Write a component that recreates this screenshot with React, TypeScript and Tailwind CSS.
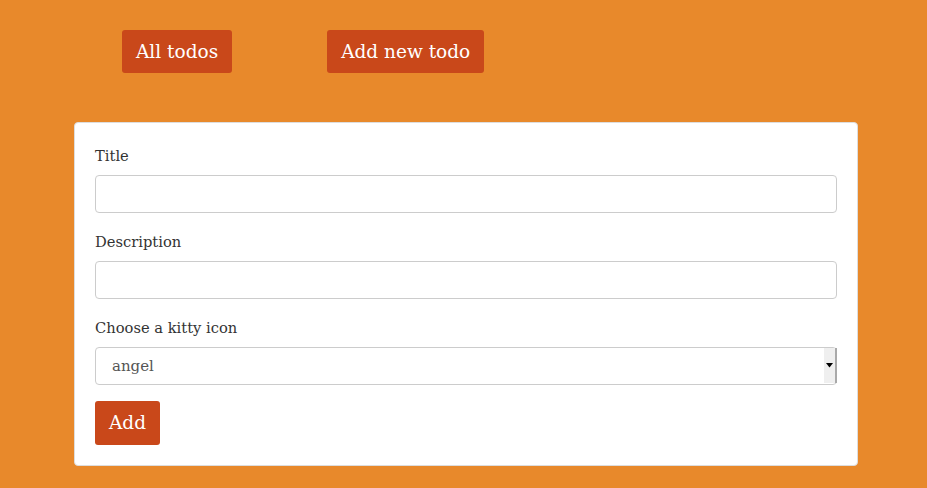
export default function App() {
  const font = { fontFamily: '"DejaVu Serif", "Liberation Serif", serif' }
  return (
    <div className="min-h-[488px] bg-[#e8892b] pt-[30px]" style={font}>
      <nav className="flex gap-[95px] pl-[122px]">
        <a href="#" className="block h-[43px] rounded-[3px] bg-[#c9481a] px-[14px] text-[18.5px] leading-[43px] text-white">
          All todos
        </a>
        <a href="#" className="block h-[43px] rounded-[3px] bg-[#c9481a] px-[14px] text-[18.5px] leading-[43px] text-white">
          Add new todo
        </a>
      </nav>

      <div className="ml-[74px] mt-[49px] w-[784px] rounded-[4px] border border-[#dddddd] bg-white px-[20px] pb-[20px] pt-[20px]">
        <form className="flex flex-col">
          <label className="text-[14.7px] leading-[26px] text-[#333333]">Title</label>
          <input className="mt-[6px] h-[38px] w-full rounded-[4px] border border-[#cccccc] px-3" />

          <label className="mt-[16px] text-[14.7px] leading-[26px] text-[#333333]">Description</label>
          <input className="mt-[6px] h-[38px] w-full rounded-[4px] border border-[#cccccc] px-3" />

          <label className="mt-[16px] text-[14.7px] leading-[26px] text-[#333333]">Choose a kitty icon</label>
          <div className="relative mt-[6px] h-[38px] w-full">
            <select className="h-[38px] w-full appearance-none rounded-[4px] border border-[#cccccc] bg-white pl-[16px] text-[15px] text-[#555555]">
              <option>angel</option>
            </select>
            <span className="pointer-events-none absolute right-0 top-[1px] flex h-[35px] w-[13px] items-center justify-center border-r-2 border-r-[#a9a9a9] bg-[#efefef]">
              <svg width="7" height="5" viewBox="0 0 7 5">
                <path d="M0 0h7L3.5 4.5z" fill="#000" />
              </svg>
            </span>
          </div>

          <div className="mt-[16px]">
            <button type="button" className="h-[44px] rounded-[3px] bg-[#c9481a] px-[14px] text-[18.5px] text-white">
              Add
            </button>
          </div>
        </form>
      </div>
    </div>
  )
}
